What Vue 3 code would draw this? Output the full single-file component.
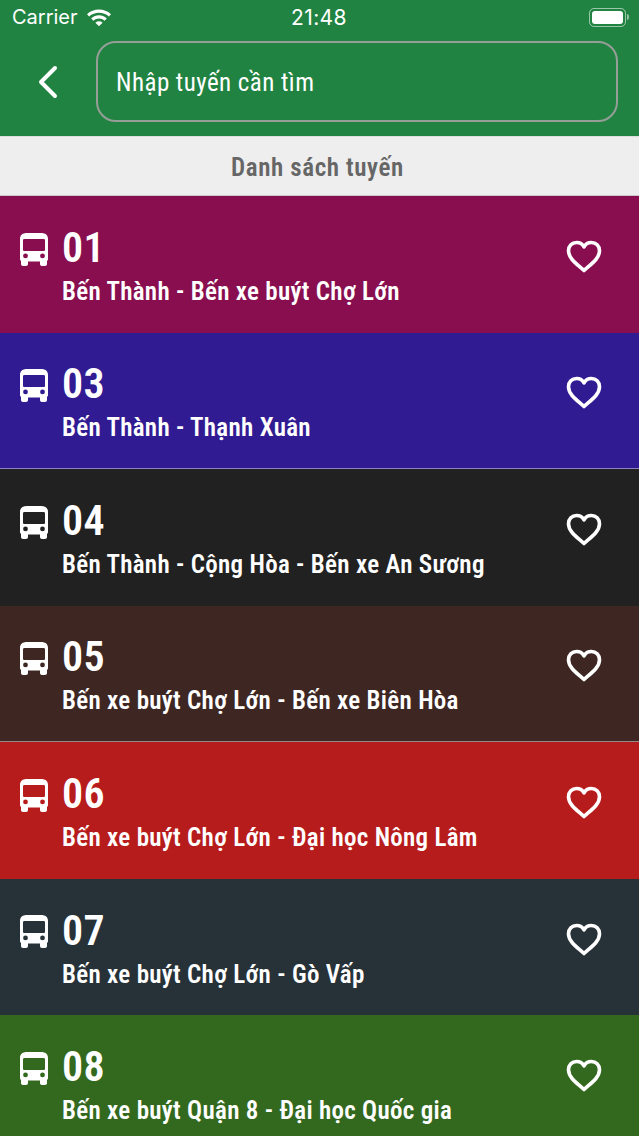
<template>
  <div class="page">
    <div class="header">
      <div class="status">
        <div class="status-left">
          <span>Carrier</span>
          <svg class="wifi" width="26" height="18" viewBox="0 0 26 18">
            <path d="M1 6.2C7.6 0 18.400 0 25 6.200L22.900 8.400C17.400 3.400 8.600 3.400 3.100 8.400Z" fill="#fff" />
            <path d="M5.200 10.500C9.800 6.300 16.200 6.300 20.800 10.500L18.600 12.700C15.200 9.700 10.800 9.700 7.400 12.700Z" fill="#fff" />
            <path d="M9.400 14.700C11.600 12.900 14.400 12.900 16.600 14.700L13 18.200Z" fill="#fff" />
          </svg>
        </div>
        <span class="clock">21:48</span>
        <div class="battery">
          <div class="battery-shell"><div class="battery-level"></div></div>
          <div class="battery-cap"></div>
        </div>
      </div>
      <div class="search-row">
        <svg class="back" width="24" height="34" viewBox="0 0 24 34">
          <path d="M20 3L6 17L20 31" fill="none" stroke="#fff" stroke-width="4" stroke-linecap="round" stroke-linejoin="round" />
        </svg>
        <div class="search">Nhập tuyến cần tìm</div>
      </div>
    </div>

    <div class="list-title">Danh sách tuyến</div>

    <div class="routes">
      <div v-for="route in routes" :key="route.code" class="route" :class="route.theme">
        <svg class="bus" width="28" height="33" viewBox="0 0 28 33">
          <path fill="#fff" fill-rule="evenodd" d="M7 0H21C25.500 0 28 2 28 6V26C28 27 27.500 27.600 27 27.900V31C27 32.200 26.200 33 25 33H22C20.800 33 20 32.200 20 31V28.500H8V31C8 32.200 7.200 33 6 33H3C1.800 33 1 32.200 1 31V27.900C.5 27.600 0 27 0 26V6C0 2 2.500 0 7 0ZM4.500 6C3.500 6 3 6.500 3 7.500V16.500C3 17.500 3.500 18 4.500 18H23.500C24.500 18 25 17.500 25 16.500V7.500C25 6.500 24.500 6 23.500 6ZM5.500 20.500A2.400 2.400 0 1 0 5.500 25.300A2.400 2.400 0 1 0 5.500 20.500ZM22.500 20.500A2.400 2.400 0 1 0 22.500 25.300A2.400 2.400 0 1 0 22.500 20.500Z" />
        </svg>
        <div class="route-text">
          <div class="route-code">{{ route.code }}</div>
          <div class="route-name">{{ route.name }}</div>
        </div>
        <svg class="heart" width="36" height="33" viewBox="0 0 36 33">
          <path d="M18 30.500C12 25 2.500 19 2.500 10.800C2.500 6 6 2.500 10.600 2.500C13.700 2.500 16.500 4 18 6.800C19.500 4 22.300 2.500 25.400 2.500C30 2.500 33.500 6 33.500 10.800C33.500 19 24 25 18 30.500Z" fill="none" stroke="#fff" stroke-width="3.600" stroke-linejoin="round" />
        </svg>
      </div>
    </div>
  </div>
</template>

<script setup>
const routes = [
  { code: '01', name: 'Bến Thành - Bến xe buýt Chợ Lớn', theme: 'plum' },
  { code: '03', name: 'Bến Thành - Thạnh Xuân', theme: 'indigo' },
  { code: '04', name: 'Bến Thành - Cộng Hòa - Bến xe An Sương', theme: 'charcoal' },
  { code: '05', name: 'Bến xe buýt Chợ Lớn - Bến xe Biên Hòa', theme: 'brown' },
  { code: '06', name: 'Bến xe buýt Chợ Lớn - Đại học Nông Lâm', theme: 'red' },
  { code: '07', name: 'Bến xe buýt Chợ Lớn - Gò Vấp', theme: 'slate' },
  { code: '08', name: 'Bến xe buýt Quận 8 - Đại học Quốc gia', theme: 'green' }
]
</script>

<style>
html, body {
  height: 100%;
  overflow: hidden;
}
</style>

<style scoped>
.page {
  width: 639px;
  height: 1136px;
  overflow: hidden;
  font-family: "Roboto", "Noto Sans", sans-serif;
  font-stretch: 85%;
  background: #eee;
}

.header {
  height: 136px;
  background: #218342;
  color: #fff;
}

.status {
  height: 41px;
  padding: 0 10px 7px 12px;
  display: flex;
  align-items: center;
  justify-content: space-between;
  position: relative;
  box-sizing: border-box;
  font-family: "Inter", sans-serif;
  font-stretch: normal;
  font-size: 20px;
}

.status-left {
  display: flex;
  align-items: center;
  gap: 8px;
}

.clock {
  position: absolute;
  left: 291px;
  top: 5px;
  font-size: 21px;
  letter-spacing: 0.4px;
}

.battery {
  display: flex;
  align-items: center;
  gap: 1px;
}

.battery-shell {
  width: 37px;
  height: 19px;
  border: 1px solid rgba(255, 255, 255, 0.55);
  border-radius: 5px;
  padding: 2px;
  box-sizing: border-box;
}

.battery-level {
  height: 100%;
  background: #fff;
  border-radius: 3px;
}

.battery-cap {
  width: 2px;
  height: 6px;
  background: rgba(255, 255, 255, 0.5);
  border-radius: 0 2px 2px 0;
}

.search-row {
  display: flex;
  align-items: center;
  padding: 0 21px 0 35px;
}

.back {
  flex: none;
}

.search {
  margin-left: 37px;
  flex: 1;
  height: 81px;
  box-sizing: border-box;
  border: 2px solid #969e98;
  border-radius: 20px;
  padding: 2px 0 0 18px;
  display: flex;
  align-items: center;
  font-size: 25px;
  letter-spacing: 0.45px;
}

.list-title {
  height: 60px;
  display: flex;
  align-items: center;
  justify-content: center;
  color: #666;
  font-size: 25px;
  font-weight: 600;
  letter-spacing: 0.6px;
  box-sizing: border-box;
  padding: 3px 4px 0 0;
  border-bottom: 1px solid #c8c8c8;
  border-top: 1px solid #ddd;
}

.route {
  height: 136.5px;
  box-sizing: border-box;
  display: flex;
  align-items: center;
  padding: 0 37px 0 20px;
  color: #fff;
}

.bus {
  flex: none;
  margin-bottom: 30px;
}

.route-text {
  flex: 1;
  margin-left: 14px;
  padding-top: 4px;
}

.route-code {
  font-size: 42px;
  font-weight: 600;
  line-height: 48px;
  letter-spacing: 0.5px;
}

.route-name {
  font-size: 25px;
  font-weight: 600;
  line-height: 32px;
  margin-top: 4px;
  letter-spacing: 0.3px;
}

.heart {
  flex: none;
  margin-bottom: 15px;
}

.plum { background: #880e4f; }
.indigo { background: #311b92; border-bottom: 1px solid rgba(255, 255, 255, 0.45); }
.charcoal { background: #212121; }
.brown { background: #3e2723; border-bottom: 1px solid rgba(255, 255, 255, 0.45); }
.red { background: #b71c1c; }
.slate { background: #263238; }
.green { background: #33691e; }
</style>
